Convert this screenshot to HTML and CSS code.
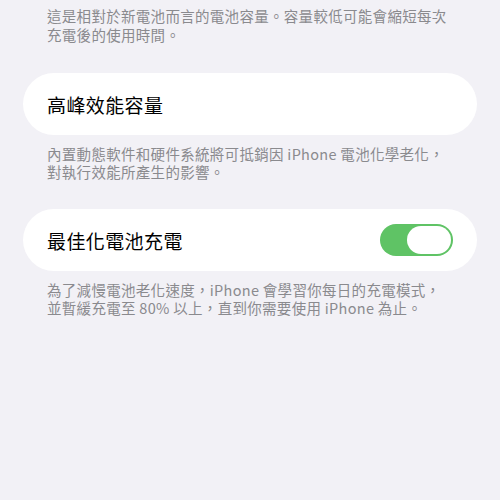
FILE: index.html
```html
<!DOCTYPE html>
<html lang="zh-Hant">
<head>
<meta charset="utf-8">
<link rel="stylesheet" href="styles.css">
</head>
<body>
<div class="page">
  <p class="note first"><span class="line">這是相對於新電池而言的電池容量。容量較低可能會縮短每次</span><span class="line">充電後的使用時間。</span></p>
  <div class="card"><span class="title">高峰效能容量</span></div>
  <p class="note"><span class="line">內置動態軟件和硬件系統將可抵銷因 iPhone 電池化學老化，</span><span class="line">對執行效能所產生的影響。</span></p>
  <div class="card"><span class="title">最佳化電池充電</span><span class="toggle"><span class="thumb"></span></span></div>
  <p class="note"><span class="line">為了減慢電池老化速度，iPhone 會學習你每日的充電模式，</span><span class="line">並暫緩充電至 80% 以上，直到你需要使用 iPhone 為止。</span></p>
</div>
</body>
</html>
```
FILE: styles.css
```css
html, body {
  margin: 0;
  padding: 0;
  background: #f2f1f6;
  font-family: "Noto Sans CJK TC", "Noto Sans", sans-serif;
}
.page {
  width: 500px;
  height: 500px;
  display: flex;
  flex-direction: column;
  padding: 6px 23px 0 23px;
  box-sizing: border-box;
}
.note {
  margin: 10px 0 28px 0;
  padding-left: 24px;
  font-size: 14.5px;
  line-height: 18px;
  color: #8a8a8e;
  letter-spacing: 0.3px;
  display: flex;
  flex-direction: column;
}
.note.first {
  margin-top: 0;
  margin-bottom: 29px;
  line-height: 19px;
}
.line {
  display: block;
  white-space: nowrap;
}
.card {
  height: 62px;
  background: #ffffff;
  border-radius: 31px;
  display: flex;
  align-items: center;
  justify-content: space-between;
  padding: 0 24px;
}
.title {
  font-size: 19px;
  color: #000;
  letter-spacing: 0.4px;
}
.toggle {
  width: 73px;
  height: 32px;
  border-radius: 16px;
  background: #5fc365;
  display: flex;
  align-items: center;
  justify-content: flex-end;
  padding: 0 2px;
  box-sizing: border-box;
}
.thumb {
  width: 44px;
  height: 28px;
  border-radius: 14px;
  background: #fff;
}
```
